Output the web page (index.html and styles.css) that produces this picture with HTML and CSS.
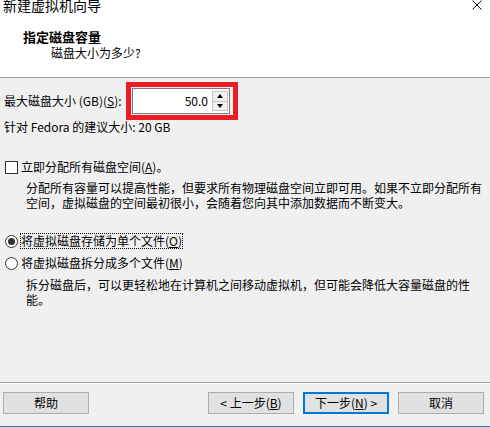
FILE: index.html
```html
<!DOCTYPE html>
<html lang="zh-CN">
<head>
  <meta charset="UTF-8">
  <title>新建虚拟机向导</title>
  <link rel="stylesheet" href="styles.css">
</head>
<body>

  <div id="wizard">

    <div id="header">
      <div class="titlebar">
        <span class="title">新建虚拟机向导</span>
        <svg class="close" width="10" height="10" viewBox="0 0 10 10">
          <path d="M0.5 0.5 L9.5 9.5 M9.5 0.5 L0.5 9.5" stroke="#111" stroke-width="1" fill="none"/>
        </svg>
      </div>
      <div class="step-title">指定磁盘容量</div>
      <div class="step-sub">磁盘大小为多少?</div>
    </div>

    <div id="content">

      <div class="size-row">
        <span class="size-label">最大磁盘大小 (GB)(<u>S</u>):</span>
        <div class="highlight">
          <div class="spin">
            <span class="spin-value">50.0</span>
            <div class="spin-buttons">
              <div class="spin-btn"><span class="arrow-up"></span></div>
              <div class="spin-btn"><span class="arrow-down"></span></div>
            </div>
          </div>
        </div>
      </div>

      <div class="hint">针对 Fedora 的建议大小: 20 GB</div>

      <div class="option check-row">
        <span class="checkbox"></span>
        <span>立即分配所有磁盘空间(<u>A</u>)。</span>
      </div>
      <div class="desc desc-first">
        <div>分配所有容量可以提高性能，但要求所有物理磁盘空间立即可用。如果不立即分配所有</div>
        <div>空间，虚拟磁盘的空间最初很小，会随着您向其中添加数据而不断变大。</div>
      </div>

      <div class="option radio-first">
        <span class="radio checked"></span>
        <span class="focused">将虚拟磁盘存储为单个文件(<u>O</u>)</span>
      </div>
      <div class="option radio-second">
        <span class="radio"></span>
        <span>将虚拟磁盘拆分成多个文件(<u>M</u>)</span>
      </div>
      <div class="desc desc-second">
        <div>拆分磁盘后，可以更轻松地在计算机之间移动虚拟机，但可能会降低大容量磁盘的性</div>
        <div>能。</div>
      </div>

    </div>

    <div id="footer">
      <button class="btn">帮助</button>
      <div class="nav-buttons">
        <button class="btn">&lt; 上一步(<u>B</u>)</button>
        <button class="btn default">下一步(<u>N</u>) &gt;</button>
        <button class="btn">取消</button>
      </div>
    </div>

  </div>

</body>
</html>
```

FILE: styles.css
```css
body {
  margin: 0;
  padding: 0;
  background-color: #f0f0f0;
  font-family: "Noto Sans CJK SC", "Microsoft YaHei", sans-serif;
  font-size: 12px;
  color: #000;
}

#wizard {
  width: 490px;
  height: 427px;
  display: flex;
  flex-direction: column;
  overflow: hidden;
}

u {
  text-decoration: underline;
  text-underline-offset: 1px;
}

/* header */

#header {
  height: 77px;
  background-color: #fff;
  border-bottom: 1px solid #a0a0a0;
}

.titlebar {
  height: 10px;
  display: flex;
  justify-content: space-between;
  padding: 0 8px 0 3px;
}

.title {
  font-size: 14px;
  line-height: 10px;
  white-space: nowrap;
}

.close {
  display: block;
}

.step-title {
  margin-top: 19px;
  padding-left: 23px;
  font-size: 13px;
  font-weight: bold;
  line-height: 16px;
}

.step-sub {
  margin-top: 1px;
  padding-left: 51px;
  line-height: 14px;
}

/* content */

#content {
  flex: 1;
}

.size-row {
  display: flex;
  align-items: center;
  margin-top: 4px;
  padding-left: 4px;
}

.size-label {
  width: 122px;
  line-height: 14px;
  white-space: nowrap;
}

.highlight {
  width: 112px;
  height: 38px;
  box-sizing: border-box;
  border: 5px solid #ed1c24;
  padding: 1px 3px 1px 1px;
}

.spin {
  height: 26px;
  box-sizing: border-box;
  border: 1px solid #7a7a7a;
  background-color: #fff;
  display: flex;
  align-items: center;
  justify-content: flex-end;
}

.spin-value {
  padding-right: 4px;
  font-size: 12px;
  line-height: 14px;
}

.spin-buttons {
  width: 16px;
  height: 20px;
  margin-right: 1px;
  display: flex;
  flex-direction: column;
}

.spin-btn {
  flex: 1;
  border: 1px solid #c4c4c4;
  background-color: #f0f0f0;
  display: flex;
  align-items: center;
  justify-content: center;
}

.spin-btn + .spin-btn {
  border-top: none;
}

.arrow-up {
  width: 0;
  height: 0;
  border-left: 3px solid transparent;
  border-right: 3px solid transparent;
  border-bottom: 4px solid #000;
}

.arrow-down {
  width: 0;
  height: 0;
  border-left: 3px solid transparent;
  border-right: 3px solid transparent;
  border-top: 4px solid #000;
}

.hint {
  padding-left: 4px;
  line-height: 14px;
}

.option {
  display: flex;
  align-items: center;
  padding-left: 5px;
  line-height: 14px;
  white-space: nowrap;
}

.check-row {
  margin-top: 26px;
}

.checkbox {
  width: 13px;
  height: 13px;
  box-sizing: border-box;
  border: 1px solid #333;
  background-color: #fff;
  margin-right: 3px;
}

.radio {
  width: 13px;
  height: 13px;
  box-sizing: border-box;
  border: 1px solid #333;
  border-radius: 50%;
  background-color: #fff;
  margin-right: 3px;
  display: flex;
  align-items: center;
  justify-content: center;
}

.radio.checked::after {
  content: "";
  width: 7px;
  height: 7px;
  border-radius: 50%;
  background-color: #333;
}

.focused {
  outline: 1px dotted #000;
}

.radio-first {
  margin-top: 24px;
}

.radio-second {
  margin-top: 8px;
}

.desc {
  padding-left: 26px;
  line-height: 15px;
  white-space: nowrap;
}

.desc-first {
  margin-top: 6px;
}

.desc-second {
  margin-top: 7px;
}

/* footer */

#footer {
  height: 45px;
  box-sizing: border-box;
  border-top: 1px solid #a0a0a0;
  box-shadow: inset 0 1px 0 #fff;
  border-bottom: 1px solid #1883d7;
  padding: 9px 6px 12px 3px;
  display: flex;
  justify-content: space-between;
}

.nav-buttons {
  display: flex;
  gap: 9px;
}

.btn {
  width: 86px;
  height: 22px;
  box-sizing: border-box;
  border: 1px solid #adadad;
  background-color: #e1e1e1;
  font-family: "Noto Sans CJK SC", "Microsoft YaHei", sans-serif;
  font-size: 12px;
  line-height: 14px;
  color: #000;
  padding: 0;
}

.btn.default {
  border: 2px solid #0078d7;
}
```
